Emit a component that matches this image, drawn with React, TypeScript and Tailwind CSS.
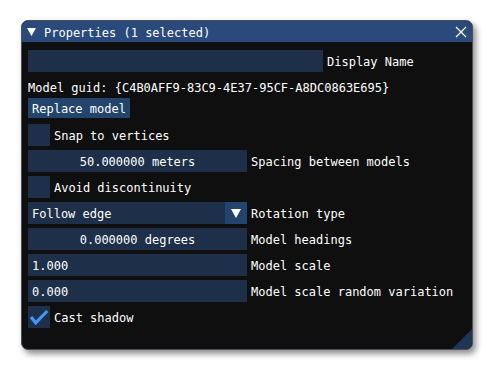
import React from 'react';

const FRAME = 'bg-[#1d2f49]';
const BUTTON = 'bg-[#23456d]';

const Label: React.FC<{ text: string }> = ({ text }) => (
  <span className="ml-[4px] pt-[2px] whitespace-pre text-white">{text}</span>
);

const Checkbox: React.FC<{ checked?: boolean; label: string }> = ({ checked, label }) => (
  <div className="flex h-[22px] items-center">
    <div className={`h-[22px] w-[22px] ${FRAME}`}>
      {checked && (
        <svg width="22" height="22" viewBox="0 0 22 22">
          <polyline
            points="3,11 7.7,16.8 19.3,5"
            fill="none"
            stroke="#4296fa"
            strokeWidth="3.2"
            strokeLinejoin="miter"
          />
        </svg>
      )}
    </div>
    <Label text={label} />
  </div>
);

const Field: React.FC<{ value: string; label: string; center?: boolean }> = ({
  value,
  label,
  center,
}) => (
  <div className="flex h-[22px] items-center">
    <div
      className={`flex h-[22px] w-[219px] items-center px-[4px] pt-[2px] text-white whitespace-pre ${FRAME} ${
        center ? 'justify-center' : 'justify-start'
      }`}>
      {value}
    </div>
    <Label text={label} />
  </div>
);

const Combo: React.FC<{ value: string; label: string }> = ({ value, label }) => (
  <div className="flex h-[22px] items-center">
    <div className={`flex h-[22px] w-[219px] items-center ${FRAME}`}>
      <span className="flex-1 pl-[4px] pt-[2px] text-white whitespace-pre">{value}</span>
      <div className={`flex h-[22px] w-[22px] items-center justify-center ${BUTTON}`}>
        <svg width="10" height="9" viewBox="0 0 10 9" className="mt-[1px]">
          <polygon points="0,0 10,0 5,9" fill="#ffffff" />
        </svg>
      </div>
    </div>
    <Label text={label} />
  </div>
);

export default function App() {
  return (
    <div
      className="h-[371px] w-[494px] overflow-hidden bg-white pl-[21px] pt-[20px] text-[12px] leading-none"
      style={{ fontFamily: '"DejaVu Sans Mono", "Liberation Mono", monospace' }}>
      <div className="relative h-[330px] w-[452px] overflow-hidden rounded-[7px] border border-[#50505a] bg-[#0f0f0f] shadow-[3px_4px_6px_rgba(0,0,0,0.45)]">
        {/* title bar */}
        <div className="flex h-[21px] items-center bg-[#294a7a] pl-[5px] pr-[5px] text-white">
          <svg width="9" height="8" viewBox="0 0 9 8">
            <polygon points="0,0 9,0 4.5,8" fill="#ffffff" />
          </svg>
          <span className="ml-[8px] pt-[2px] whitespace-pre">Properties (1 selected)</span>
          <div className="flex-1" />
          <svg width="12" height="12" viewBox="0 0 12 12">
            <path d="M1 1 L11 11 M11 1 L1 11" stroke="#ffffff" strokeWidth="1.2" />
          </svg>
        </div>

        {/* body */}
        <div className="flex flex-col px-[6px] pt-[8px]">
          <div className="flex h-[22px] items-center">
            <div className={`h-[22px] w-[295px] ${FRAME}`} />
            <Label text="Display Name" />
          </div>

          <div className="mt-[5px] flex h-[20px] items-center pt-[2px] whitespace-pre text-white">
            Model guid: {'{C4B0AFF9-83C9-4E37-95CF-A8DC0863E695}'}
          </div>

          <div className="mt-[1px] flex">
            <div className={`flex h-[20px] items-center px-[4px] pt-[2px] text-white whitespace-pre ${BUTTON}`}>
              Replace model
            </div>
          </div>

          <div className="mt-[6px] flex flex-col gap-[4px]">
            <Checkbox label="Snap to vertices" />
            <Field value="50.000000 meters" label="Spacing between models" center />
            <Checkbox label="Avoid discontinuity" />
            <Combo value="Follow edge" label="Rotation type" />
            <Field value="0.000000 degrees" label="Model headings" center />
            <Field value="1.000" label="Model scale" />
            <Field value="0.000" label="Model scale random variation" />
            <Checkbox checked label="Cast shadow" />
          </div>
        </div>

        {/* resize grip */}
        <svg width="20" height="20" viewBox="0 0 20 20" className="absolute bottom-0 right-0">
          <polygon points="20,0 20,20 0,20" fill="#1e3656" />
        </svg>
      </div>
    </div>
  );
}
